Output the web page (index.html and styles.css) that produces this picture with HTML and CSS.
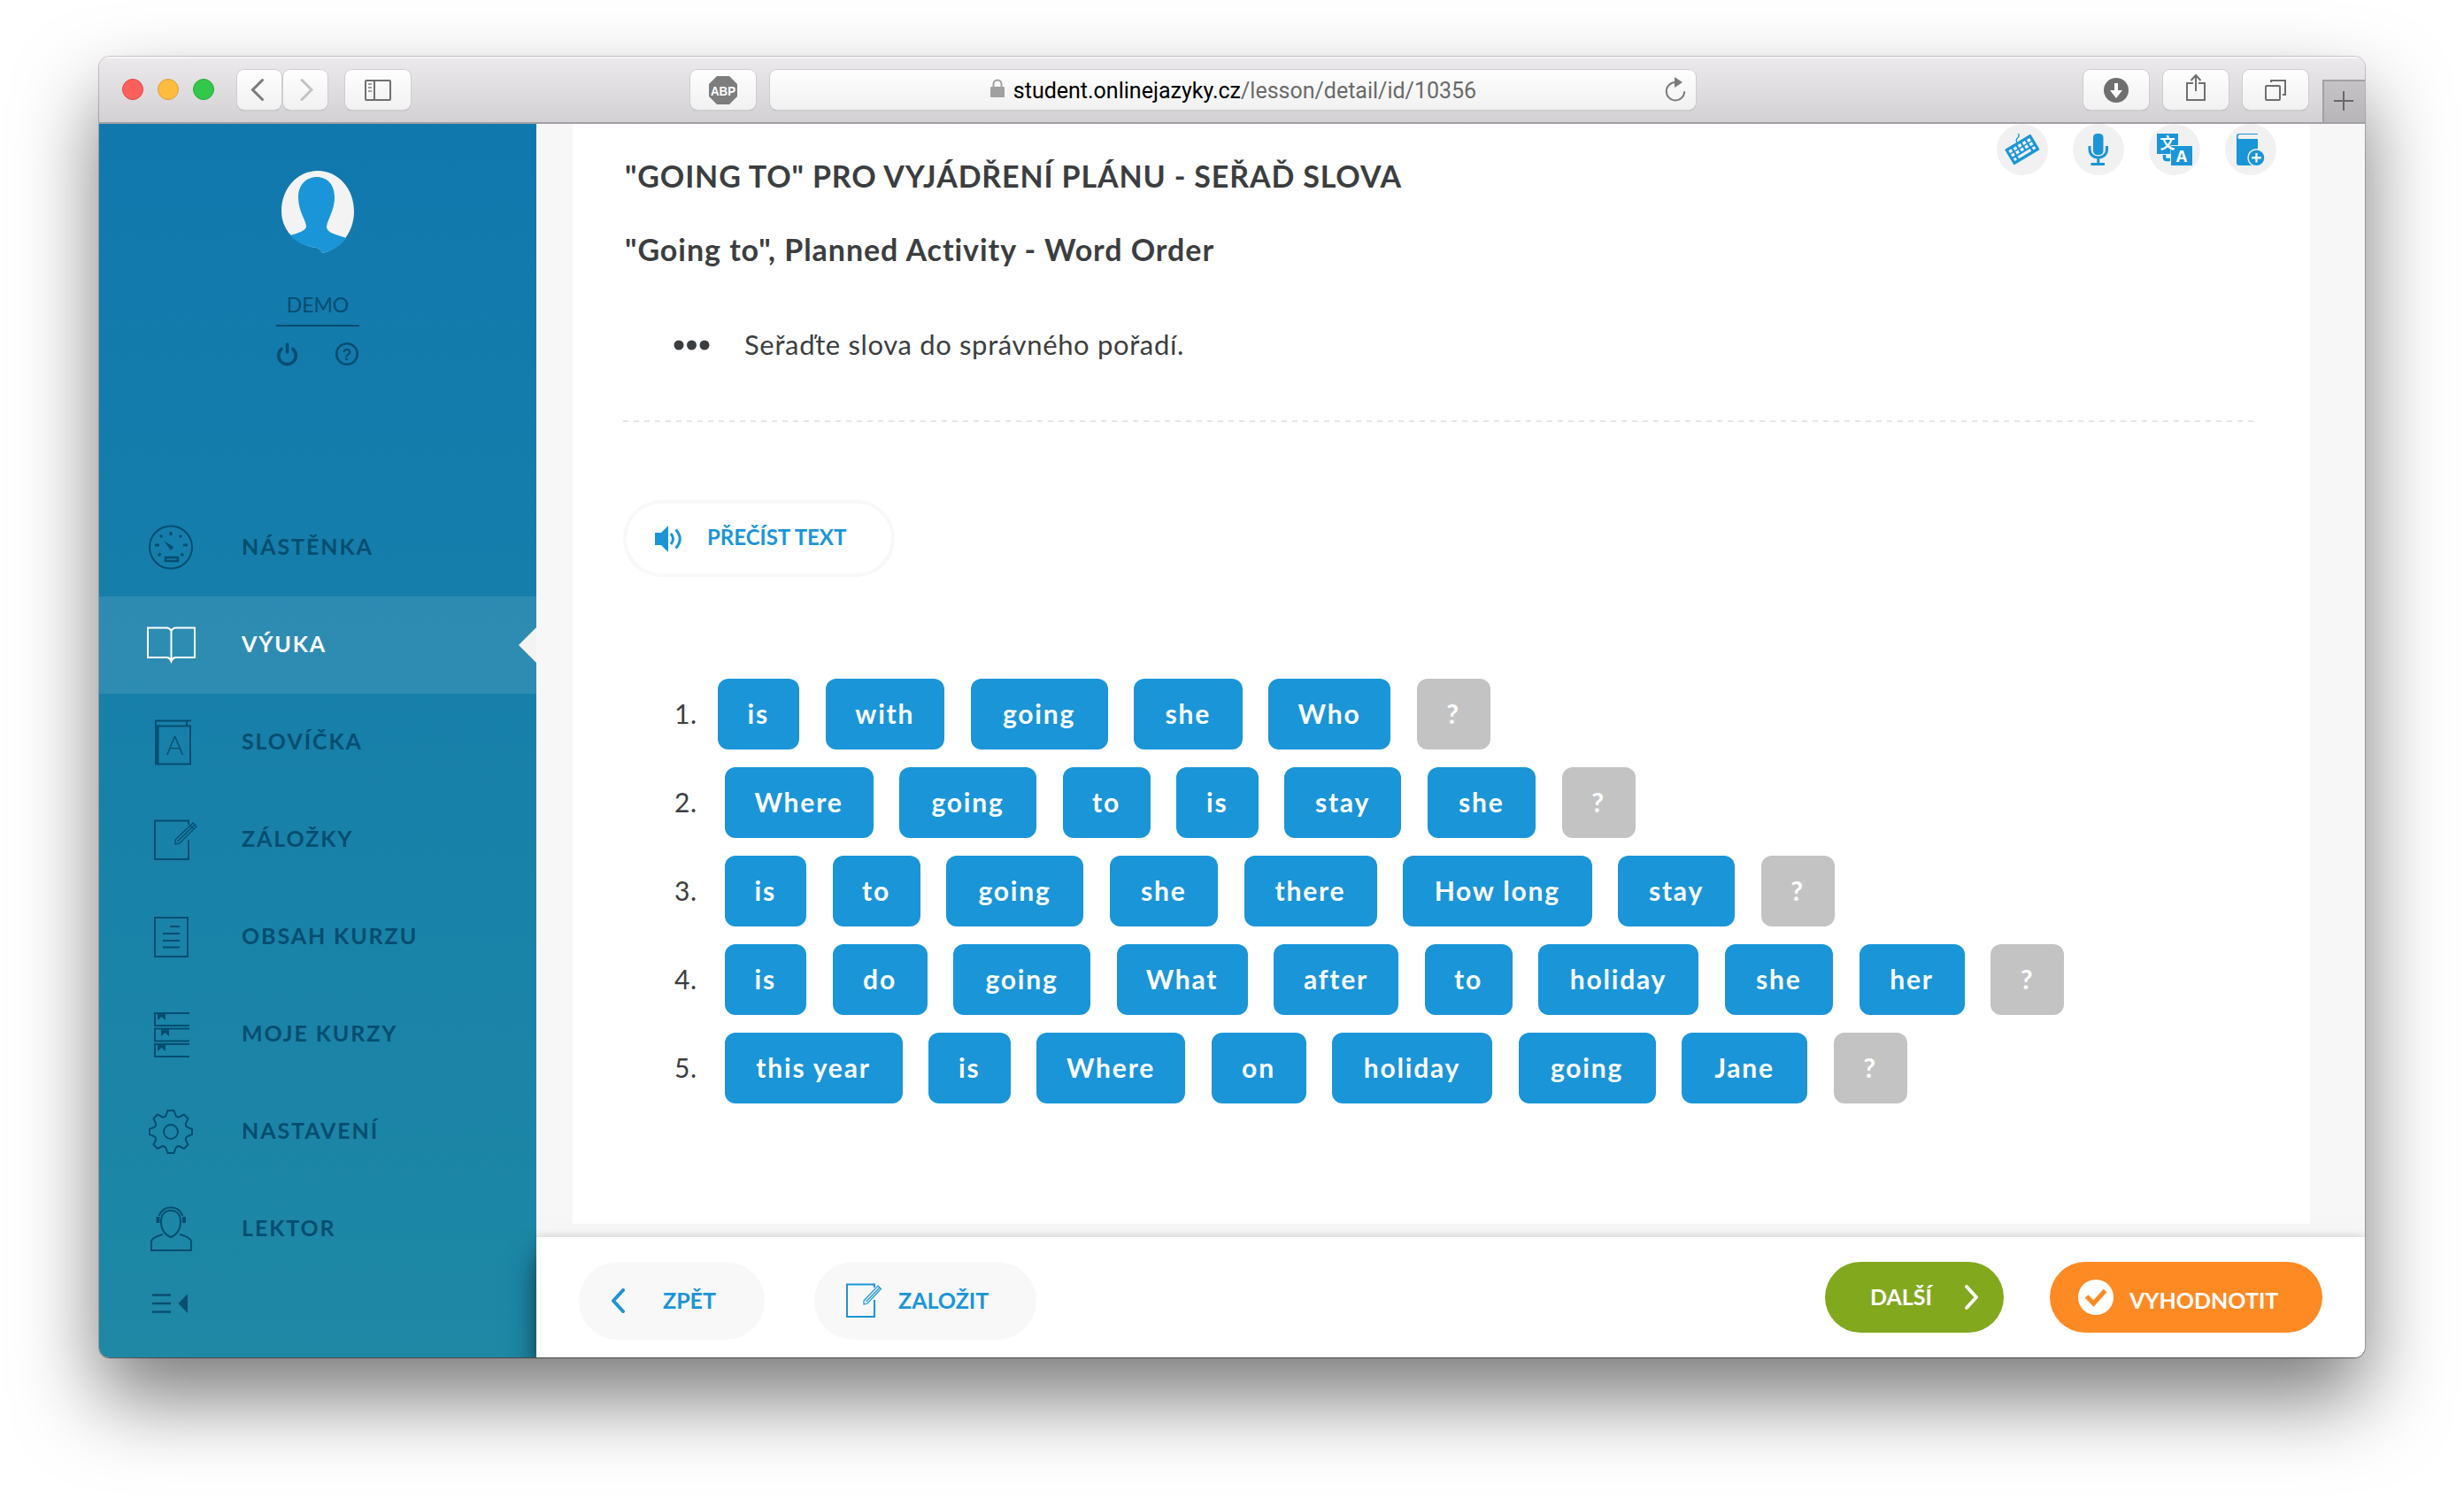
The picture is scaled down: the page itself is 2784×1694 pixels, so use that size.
FILE: index.html
```html
<!DOCTYPE html>
<html lang="cs">
<head>
  <meta charset="UTF-8">
  <title>Online jazyky</title>
  <link rel="stylesheet" href="styles.css">
</head>
<body>

<div class="window">

  <!-- Browser toolbar -->
  <div class="toolbar">
    <div class="lights">
      <span class="light red"></span>
      <span class="light yellow"></span>
      <span class="light green"></span>
    </div>
    <div class="history">
      <div class="tool-btn back">
        <svg width="50" height="44" viewBox="0 0 50 44"><path d="M28.500 10.500L17.500 21.500L28.500 32.500" fill="none" stroke="#7b7b7b" stroke-width="3" stroke-linecap="round"/></svg>
      </div>
      <div class="tool-btn forward">
        <svg width="50" height="44" viewBox="0 0 50 44"><path d="M21 10.500L32 21.500L21 32.500" fill="none" stroke="#c3c3c3" stroke-width="3" stroke-linecap="round"/></svg>
      </div>
    </div>
    <div class="tool-btn side-toggle">
      <svg width="30" height="24" viewBox="0 0 30 24" fill="none" stroke="#6f6f6f" stroke-width="2"><rect x="1" y="1" width="28" height="22" rx="1"/><path d="M11 1V23"/><path d="M4 5H8M4 9H8M4 13H8" stroke="#a0a0a0"/></svg>
    </div>
    <div class="tool-btn abp">
      <svg width="32" height="32" viewBox="0 0 32 32"><path d="M9 0H23L32 9V23L23 32H9L0 23V9Z" fill="#7d7d7d"/><text x="16" y="21.500" text-anchor="middle" textLength="28" lengthAdjust="spacingAndGlyphs" class="abp-text">ABP</text></svg>
    </div>
    <div class="address">
      <svg class="lock" width="18" height="22" viewBox="0 0 18 22"><rect x="1" y="9" width="16" height="12" rx="1" fill="#a0a0a0"/><path d="M4.500 10V6a4.500 4.500 0 0 1 9 0V10" fill="none" stroke="#a0a0a0" stroke-width="2"/></svg>
      <span class="url"><b>student.onlinejazyky.cz</b>/lesson/detail/id/10356</span>
      <svg class="reload" width="26" height="28" viewBox="0 0 26 28"><path d="M13 6A10.200 10.200 0 1 0 23.200 16.200" fill="none" stroke="#7b7b7b" stroke-width="2"/><path d="M12 0V12L21 6Z" fill="#7b7b7b"/></svg>
    </div>
    <div class="right-tools">
      <div class="tool-btn">
        <svg width="28" height="28" viewBox="0 0 28 28"><circle cx="14" cy="14" r="14" fill="#6f6f6f"/><path d="M12 6H16V14H21L14 23L7 14H12Z" fill="#fff"/></svg>
      </div>
      <div class="tool-btn share">
        <svg width="24" height="32" viewBox="0 0 24 32" fill="none" stroke="#6f6f6f" stroke-width="2"><path d="M9 11H2V30H22V11H15"/><path d="M12 20V3M6.500 8L12 2L17.500 8"/></svg>
      </div>
      <div class="tool-btn">
        <svg width="26" height="26" viewBox="0 0 26 26" fill="none" stroke="#6f6f6f" stroke-width="2"><rect x="2" y="8" width="16" height="16" rx="1"/><path d="M8 4V2H24V18H21"/></svg>
      </div>
    </div>
    <div class="new-tab">
      <svg width="22" height="22" viewBox="0 0 22 22"><path d="M11 0V22M0 11H22" stroke="#68666a" stroke-width="2"/></svg>
    </div>
  </div>

  <div class="page">

    <!-- Sidebar -->
    <aside class="sidebar">
      <div class="profile">
        <svg class="avatar" width="86" height="96" viewBox="0 0 86 96">
          <path d="M43 2C66 2 84 22 84 48C84 72 68 91 48 95C47 90 42 89 36 88C16 84 2 67 2 48C2 22 20 2 43 2Z" fill="#f3f3f3"/>
          <path d="M42 9C54 9 62 18 62 32C62 48 53 58 53 66C54 72 63 74 75.500 78C69 87 59 93 48 95C47 90 42 89 36 88C26 86 17 81 11.500 75C22 72 29 70 30 65C30 58 21 48 21 32C21 18 30 9 42 9Z" fill="#1a95d8"/>
        </svg>
        <div class="user-name">DEMO</div>
        <div class="user-links">
          <svg width="26" height="28" viewBox="0 0 26 28" fill="none" stroke="#044e70" stroke-width="3.600" stroke-linecap="round"><path d="M12.500 3V12"/><path d="M6 8.500A9.800 9.800 0 1 0 19 8.500"/></svg>
          <svg width="28" height="28" viewBox="0 0 28 28"><circle cx="14" cy="14" r="11.800" fill="none" stroke="#044e70" stroke-width="2.500"/><text x="14" y="20.500" text-anchor="middle" class="q-text">?</text></svg>
        </div>
      </div>

      <nav>
        <a href="#" class="nav-item">
          <svg width="64" height="60" viewBox="0 0 64 60"><circle cx="31" cy="29.500" r="24"/><path d="M31 12V16M19 16L21 18M43 16L41 18M13 27H18M45 27H50M17 39L19.500 36.500M45 39L42.500 36.500" stroke-width="3"/><path d="M23 22L34 29L31 33Z" fill="#044e70" stroke="none"/><rect x="25" y="41" width="14" height="4" stroke-width="2.500"/></svg>
          <span>NÁSTĚNKA</span>
        </a>
        <a href="#" class="nav-item active">
          <svg width="64" height="60" viewBox="0 0 64 60"><path d="M5 10.500H27Q30 11 31.500 14Q33 11 36 10.500H58V44H36Q33 44.500 31.500 48.500Q30 44.500 27 44H5ZM31.500 14V48"/></svg>
          <span>VÝUKA</span>
        </a>
        <a href="#" class="nav-item">
          <svg width="64" height="60" viewBox="0 0 64 60"><path d="M54 5.500H14V54.500H53V11.500H14M49 5V11"/><path d="M15.500 11V55" stroke-width="4"/><text x="35.500" y="44" text-anchor="middle" class="dict-text">A</text></svg>
          <span>SLOVÍČKA</span>
        </a>
        <a href="#" class="nav-item">
          <svg width="64" height="60" viewBox="0 0 64 60"><path d="M51 13V8.500H13V52H51V30"/><path d="M36 30L56 11L60 15L41 34L36 35ZM38.500 32L58 13M53 14L57 18" stroke-width="1.300"/></svg>
          <span>ZÁLOŽKY</span>
        </a>
        <a href="#" class="nav-item">
          <svg width="64" height="60" viewBox="0 0 64 60"><path d="M13 8H50V52H13ZM30 18H41M22 26H41M22 34H41M22 41.500H41"/></svg>
          <span>OBSAH KURZU</span>
        </a>
        <a href="#" class="nav-item">
          <svg width="64" height="60" viewBox="0 0 64 60"><path d="M52 6H13V20H52M52 23.500H13V37.500H52M52 41H13V55H52"/><path d="M16 6H25V14L20.500 10L16 14ZM20 23.500H29V32L24.500 28L20 32ZM16 41H25V49L20.500 45L16 49Z" fill="#044e70" stroke="none"/></svg>
          <span>MOJE KURZY</span>
        </a>
        <a href="#" class="nav-item">
          <svg width="64" height="60" viewBox="0 0 64 60"><path d="M27.500 6H34.500L37 12.500Q39 14 41 13L46 10.500L50.500 15L48 20.500Q47.500 23 49 24.500L55 27V33L49 35.500Q47.500 37 48 39.500L50.500 44.500L46 49L41 46.500Q39 46 37 47.500L34.500 54H27.500L25 47.500Q23 46 21 46.500L16 49L11.500 44.500L14 39.500Q14.500 37 13 35.500L7 33V27L13 24.500Q14.500 23 14 20.500L11.500 15L16 10.500L21 13Q23 14 25 12.500Z"/><circle cx="31" cy="30" r="8"/></svg>
          <span>NASTAVENÍ</span>
        </a>
        <a href="#" class="nav-item">
          <svg width="64" height="60" viewBox="0 0 64 60"><path d="M31 9C38 9 42 14 42 22C42 31 37 37 31 39C25 37 20 31 20 22C20 14 24 9 31 9Z"/><path d="M17.500 15C20 9 25 5.500 31 5.500S42 9 44.500 15"/><path d="M16.500 16V23M46 16V23" stroke-width="4"/><path d="M22 36Q12 38.500 9 43V54H54V43Q51 38.500 41 36"/></svg>
          <span>LEKTOR</span>
        </a>
      </nav>

      <svg class="collapse" width="40" height="22" viewBox="0 0 40 22"><path d="M0 1.500H21M0 11H21M0 20.500H21" stroke="#0b4f70" stroke-width="2.600"/><path d="M40 0V22L29.500 11Z" fill="#0b4f70"/></svg>
    </aside>

    <!-- Lesson -->
    <main>
      <section class="lesson">
        <div class="lesson-head">
          <h1>"GOING TO" PRO VYJÁDŘENÍ PLÁNU - SEŘAĎ SLOVA</h1>
          <div class="lesson-tools">
            <svg width="58" height="58" viewBox="0 0 58 58"><circle cx="29" cy="29" r="29" fill="#f1f1f1"/>
              <g transform="translate(9 29) rotate(-31)"><rect width="34" height="20.500" rx="1" fill="#1a95d8"/><path d="M3 5H31M3 10H31" stroke="#f1f1f1" stroke-width="3.500" stroke-dasharray="3.800 2.200"/><path d="M3 15.500H6M8.500 15.500H25M27.500 15.500H31" stroke="#f1f1f1" stroke-width="3.200"/></g>
              <path d="M23 21Q21 18 24 15.500Q26 13.500 24.500 11" fill="none" stroke="#1a95d8" stroke-width="1.300"/></svg>
            <svg width="58" height="58" viewBox="0 0 58 58"><circle cx="29" cy="29" r="29" fill="#f1f1f1"/><rect x="23" y="11" width="11.500" height="24" rx="4.500" fill="#1a95d8"/><path d="M19 25V29C19 41 38.500 41 38.500 29V25M28.800 38V45M20.500 45.500H36" fill="none" stroke="#1a95d8" stroke-width="3"/></svg>
            <svg width="58" height="58" viewBox="0 0 58 58"><circle cx="29" cy="29" r="29" fill="#f1f1f1"/><path d="M9 11H33V24H24.500V34H9Z" fill="#1a95d8"/><path d="M17.500 35V38Q17.500 40.500 20 40.500H24" fill="none" stroke="#1a95d8" stroke-width="3.500"/><rect x="25" y="25" width="24" height="22" fill="#1a95d8"/><text x="21" y="28" text-anchor="middle" class="cjk-text">文</text><text x="37" y="43" text-anchor="middle" class="a-text">A</text></svg>
            <svg width="58" height="58" viewBox="0 0 58 58"><circle cx="29" cy="29" r="29" fill="#f1f1f1"/><path d="M37 11H16Q13 11 13 14V44Q13 47 16 47H37V17H16Q14.500 17 14.500 15T16 12H37Z" fill="#1a95d8"/><circle cx="35.500" cy="38.300" r="9.500" fill="#1a95d8" stroke="#f1f1f1" stroke-width="1.500"/><path d="M35.500 33V43.600M30.200 38.300H40.800" stroke="#f1f1f1" stroke-width="2.400"/></svg>
          </div>
        </div>
        <h2>"Going to", Planned Activity - Word Order</h2>
        <div class="instruction">
          <svg width="42" height="12" viewBox="0 0 42 12" fill="#3b3e40"><circle cx="6" cy="6" r="5.500"/><circle cx="20.500" cy="6" r="5.500"/><circle cx="35" cy="6" r="5.500"/></svg>
          <span>Seřaďte slova do správného pořadí.</span>
        </div>
        <div class="divider"></div>
        <a href="#" class="read-btn">
          <svg width="32" height="30" viewBox="0 0 32 30"><path d="M0 8H7L15 0V30L7 22H0Z" fill="#1a95d8"/><path d="M18 9Q23 15 18 21M23.500 4.500Q33 15 23.500 25.500" fill="none" stroke="#1a95d8" stroke-width="3"/></svg>
          <span>PŘEČÍST TEXT</span>
        </a>

        <div class="sentences">
          <div class="sentence">
            <span class="num">1.</span>
            <span class="word w-is">is</span>
            <span class="word w-with">with</span>
            <span class="word w-going">going</span>
            <span class="word w-she">she</span>
            <span class="word w-who">Who</span>
            <span class="word mark">?</span>
          </div>
          <div class="sentence">
            <span class="num">2.</span>
            <span class="word w-where">Where</span>
            <span class="word w-going">going</span>
            <span class="word w-to">to</span>
            <span class="word w-is">is</span>
            <span class="word w-stay">stay</span>
            <span class="word w-she">she</span>
            <span class="word mark">?</span>
          </div>
          <div class="sentence">
            <span class="num">3.</span>
            <span class="word w-is">is</span>
            <span class="word w-to">to</span>
            <span class="word w-going">going</span>
            <span class="word w-she">she</span>
            <span class="word w-there">there</span>
            <span class="word w-how-long">How long</span>
            <span class="word w-stay">stay</span>
            <span class="word mark">?</span>
          </div>
          <div class="sentence">
            <span class="num">4.</span>
            <span class="word w-is">is</span>
            <span class="word w-do">do</span>
            <span class="word w-going">going</span>
            <span class="word w-what">What</span>
            <span class="word w-after">after</span>
            <span class="word w-to">to</span>
            <span class="word w-holiday">holiday</span>
            <span class="word w-she">she</span>
            <span class="word w-her">her</span>
            <span class="word mark">?</span>
          </div>
          <div class="sentence">
            <span class="num">5.</span>
            <span class="word w-this-year">this year</span>
            <span class="word w-is">is</span>
            <span class="word w-where">Where</span>
            <span class="word w-on">on</span>
            <span class="word w-holiday">holiday</span>
            <span class="word w-going">going</span>
            <span class="word w-jane">Jane</span>
            <span class="word mark">?</span>
          </div>
        </div>
      </section>

      <!-- Bottom bar -->
      <footer>
        <a href="#" class="btn btn-back">
          <svg width="16" height="28" viewBox="0 0 16 28"><path d="M14 2L3 14L14 26" fill="none" stroke="#1a95d8" stroke-width="4" stroke-linecap="round" stroke-linejoin="round"/></svg>
          <span>ZPĚT</span>
        </a>
        <a href="#" class="btn btn-save">
          <svg width="42" height="40" viewBox="0 0 42 40" fill="none" stroke="#1a95d8" stroke-width="2"><path d="M32 5V1.500H1V38H32V19"/><path d="M20 20L36 3L39.500 6.500L24 23L20 24ZM22.500 21L38 5" stroke-width="1.200"/></svg>
          <span>ZALOŽIT</span>
        </a>
        <a href="#" class="btn btn-next">
          <span>DALŠÍ</span>
          <svg width="16" height="28" viewBox="0 0 16 28"><path d="M2 2L13 14L2 26" fill="none" stroke="#fff" stroke-width="4" stroke-linecap="round" stroke-linejoin="round"/></svg>
        </a>
        <a href="#" class="btn btn-check">
          <svg width="40" height="40" viewBox="0 0 40 40"><circle cx="20" cy="20" r="20" fill="#fff"/><path d="M9.500 19L17.500 27L30.500 12.500" fill="none" stroke="#fe8a24" stroke-width="5"/></svg>
          <span>VYHODNOTIT</span>
        </a>
      </footer>
    </main>
  </div>
</div>

</body>
</html>
```

FILE: styles.css
```css
* {
  box-sizing: border-box;
}

body {
  height: 1694px;
  margin: 0;
  padding: 64px 112px 0;
  background: #fff;
  font-family: Lato, "Open Sans", sans-serif;
  color: #3b3e40;
  overflow: hidden;
}

a {
  text-decoration: none;
  color: inherit;
}

svg {
  display: block;
  flex: none;
}

.window {
  width: 2560px;
  height: 1470px;
  border-radius: 12px;
  box-shadow: 0 0 0 1px rgba(0, 0, 0, 0.18), 0 1px 1px rgba(0, 0, 0, 0.4), 0 46px 92px rgba(0, 0, 0, 0.52);
  overflow: hidden;
}

/* Browser toolbar */
.toolbar {
  height: 76px;
  display: flex;
  align-items: flex-start;
  background: linear-gradient(#ece9ec, #d4d1d5);
  border-top: 2px solid #f6f5f6;
  border-bottom: 2px solid #a2a0a4;
}

.lights {
  display: flex;
  gap: 16px;
  margin: 23px 26px 0 26px;
}

.light {
  width: 24px;
  height: 24px;
  border-radius: 50%;
}

.red {
  background: #fc605c;
  border: 1px solid #e04643;
}

.yellow {
  background: #fdbc40;
  border: 1px solid #dd9f35;
}

.green {
  background: #34c84a;
  border: 1px solid #24ab38;
}

.tool-btn,
.address {
  height: 45px;
  margin-top: 13px;
  display: flex;
  align-items: center;
  justify-content: center;
  background: linear-gradient(#fefefe, #f1f1f1);
  border-radius: 8px;
  box-shadow: 0 0 0 1px #cfcdd0, 0 1px 1px #8e8c90;
}

.tool-btn {
  width: 74px;
}

.history {
  display: flex;
  gap: 2px;
  margin-right: 20px;
}

.history .tool-btn {
  width: 50px;
}

.abp {
  margin-left: 316px;
}

.abp-text {
  font: bold 14px "Liberation Sans", sans-serif;
  fill: #fff;
}

.address {
  width: 1046px;
  margin-left: 16px;
  position: relative;
}

.lock {
  margin-right: 9px;
  margin-top: -4px;
}

.url {
  padding-top: 2px;
  font-family: Roboto, sans-serif;
  font-size: 25px;
  color: #6a6a6a;
}

.url b {
  font-weight: normal;
  color: #000;
}

.reload {
  position: absolute;
  right: 10px;
  top: 8px;
}

.right-tools {
  display: flex;
  gap: 16px;
  margin-left: auto;
}

.share svg {
  margin-top: -5px;
}

.new-tab {
  width: 48px;
  height: 48px;
  margin-left: 16px;
  align-self: flex-end;
  display: flex;
  align-items: center;
  justify-content: center;
  background: linear-gradient(#c6c3c7, #b8b5b9);
  border-top: 2px solid #a2a0a4;
  border-left: 2px solid #a2a0a4;
}

.new-tab svg {
  margin: -3px 2px 0 0;
}

.page {
  height: 1394px;
  display: flex;
}

/* Sidebar */
.sidebar {
  width: 494px;
  background: linear-gradient(#1178ae, #1e88a5);
}

.profile {
  height: 424px;
  padding-top: 51px;
  display: flex;
  flex-direction: column;
  align-items: center;
}

.user-name {
  width: 94px;
  height: 38px;
  margin-top: 44px;
  line-height: 26px;
  text-align: center;
  font-size: 23px;
  color: #044e70;
  border-bottom: 2px solid #044e70;
}

.user-links {
  width: 94px;
  margin-top: 17px;
  display: flex;
  justify-content: space-between;
}

.q-text {
  font: bold 18px "Liberation Sans", sans-serif;
  fill: #044e70;
}

.nav-item {
  height: 110px;
  padding-left: 50px;
  display: flex;
  align-items: center;
  gap: 47px;
  position: relative;
  font-size: 25px;
  font-weight: bold;
  letter-spacing: 1.9px;
  color: #044e70;
}

.nav-item span {
  padding-bottom: 5px;
}

.nav-item svg {
  fill: none;
  stroke: #044e70;
  stroke-width: 2;
}

.nav-item.active {
  color: #fff;
  background: rgba(255, 255, 255, 0.1);
}

.nav-item.active svg {
  stroke: #fff;
}

.nav-item.active::after {
  content: "";
  position: absolute;
  right: 0;
  top: 35px;
  border: 20px solid transparent;
  border-right-color: #f3f3f3;
  border-left: none;
}

.dict-text {
  font: 300 30px Lato, sans-serif;
  letter-spacing: 0;
  fill: #044e70;
  stroke: none;
}

.collapse {
  margin: 18px 0 0 60px;
}

/* Lesson */
main {
  flex: 1;
  display: flex;
  flex-direction: column;
  background: #f7f7f7;
}

.lesson {
  height: 1243px;
  margin: 0 62px 15px 41px;
  padding-left: 57px;
  background: #fff;
}

.lesson-head {
  height: 79px;
  display: flex;
  justify-content: space-between;
  padding-right: 38px;
}

h1,
h2 {
  margin: 0 0 0 2px;
  font-size: 34px;
  line-height: 40px;
  letter-spacing: 0.85px;
}

h1 {
  padding-top: 39px;
}

h2 {
  padding-top: 43px;
  letter-spacing: 0.95px;
}

.lesson-tools {
  display: flex;
  gap: 28px;
}

.cjk-text {
  font: bold 17px "Noto Sans CJK SC", sans-serif;
  fill: #fff;
}

.a-text {
  font: bold 18px "Open Sans", sans-serif;
  fill: #fff;
}

.instruction {
  display: flex;
  align-items: center;
  gap: 38px;
  height: 40px;
  margin: 68px 0 65px 57px;
  font-size: 31px;
  letter-spacing: 0.65px;
}

.instruction span {
  padding-bottom: 2px;
}

.divider {
  width: 1848px;
  height: 2px;
  background: repeating-linear-gradient(90deg, #e6e6e6 0 6px, transparent 6px 12px);
}

.read-btn {
  width: 307px;
  height: 87px;
  margin-top: 88px;
  padding-left: 32px;
  display: flex;
  align-items: center;
  gap: 27px;
  border: 4px solid #f8f8f8;
  border-radius: 44px;
  font-size: 24px;
  font-weight: bold;
  color: #1a95d8;
}

.read-btn span {
  padding-bottom: 4px;
}

.sentences {
  margin: 115px 0 0 58px;
  display: flex;
  flex-direction: column;
  gap: 20px;
}

.sentence {
  height: 80px;
  display: flex;
  gap: 29.500px;
  font-size: 30px;
  line-height: 78px;
}

.num {
  width: 27px;
  letter-spacing: 0.5px;
}

.sentence:first-child .num {
  width: 19px;
}

.word {
  border-radius: 12px;
  background: #1a95d8;
  color: #fff;
  text-align: center;
  font-weight: bold;
  letter-spacing: 1.800px;
}

.mark {
  width: 83px;
  background: #c3c3c3;
}

.w-is { width: 92.500px; }
.w-to { width: 99px; }
.w-do, .w-on { width: 107px; }
.w-her { width: 119px; }
.w-she { width: 122.500px; }
.w-stay { width: 132px; }
.w-with { width: 134.500px; }
.w-who { width: 138px; }
.w-after { width: 141px; }
.w-jane { width: 142px; }
.w-what { width: 148px; }
.w-there { width: 150px; }
.w-going { width: 155px; }
.w-where { width: 168px; }
.w-holiday { width: 181px; }
.w-this-year { width: 201px; }
.w-how-long { width: 213.500px; }

/* Bottom bar */
footer {
  height: 136px;
  padding: 28px 48px 0;
  display: flex;
  background: #fff;
  position: relative;
  box-shadow: 0 24px 30px rgba(0, 0, 0, 0.5), 0 0 10px rgba(0, 0, 0, 0.15);
}

.btn {
  height: 80px;
  display: flex;
  align-items: center;
  border-radius: 44px;
  font-size: 25px;
  font-weight: bold;
  color: #fff;
}

.btn span {
  padding-bottom: 3px;
}

.btn-back,
.btn-save {
  height: 88px;
  background: #f8f8f8;
  color: #1a95d8;
}

.btn-back {
  width: 210px;
  padding-left: 36px;
  gap: 43px;
}

.btn-save {
  width: 251px;
  margin-left: 56px;
  padding-left: 36px;
  gap: 17px;
}

.btn-next {
  width: 202px;
  margin-left: auto;
  padding-left: 51px;
  gap: 37px;
  background: #82a81e;
}

.btn-check {
  width: 308px;
  margin-left: 52px;
  padding-left: 32px;
  gap: 18px;
  background: #fe8a24;
}

.btn-check span {
  padding: 5px 0 0;
}
```
